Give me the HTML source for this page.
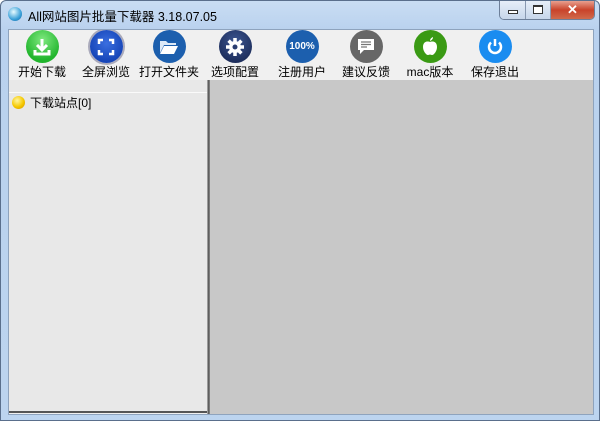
<!DOCTYPE html>
<html><head><meta charset="utf-8"><style>
*{margin:0;padding:0;box-sizing:border-box}
body{width:600px;height:421px;overflow:hidden;font-family:"Liberation Sans","Noto Sans CJK SC",sans-serif;font-size:12px;color:#000;background:#fff}
.win{position:absolute;left:0;top:0;width:600px;height:421px;background:linear-gradient(#c9ddf3,#b9d1ee 30px,#bcd4ef);border:1px solid #5a6f8c;border-radius:6px 6px 0 0}
.title{position:absolute;left:27px;top:5px;font-size:12.5px;color:#000}
.logo{position:absolute;left:7px;top:6px;width:14px;height:14px;border-radius:50%;background:radial-gradient(circle at 40% 35%,#e8fbff,#3aa0d8 60%,#1060a0)}
.btns{position:absolute;left:498px;top:0;height:19px;display:flex;border:1px solid #6d7f99;border-top:none;border-radius:0 0 5px 5px;overflow:hidden}
.btns div{height:18px;background:linear-gradient(#e6eef8,#c7d6ea);border-right:1px solid #8898b0;position:relative}
.b1{width:26px}.b2{width:25px}.b3{width:43px;background:linear-gradient(#e8a08f,#c9432a 50%,#d06a4c)!important;border:none!important;color:#fff;text-align:center;font-weight:bold;font-size:13px;line-height:17px}
.client{position:absolute;left:7px;top:28px;width:586px;height:386px;background:#f0f0f0;border:1px solid #8ea3bd;overflow:hidden}
.tb{position:absolute;left:0;top:0;width:584px;height:50px;background:#f0f0f0}
.it{position:absolute;top:0px;width:70px;text-align:center}
.ic{width:33px;height:33px;border-radius:50%;margin:0 auto;display:flex;align-items:center;justify-content:center;color:#fff;font-weight:bold}
.lb{font-size:12px;margin-top:3px;line-height:13px;white-space:nowrap}
.left{position:absolute;left:0;top:50px;width:198px;height:333px;background:#e8e8e8;border-bottom:2px solid #555}
.split{position:absolute;left:198px;top:50px;width:3px;height:334px;background:linear-gradient(90deg,#ccc,#555 40%,#888)}
.right{position:absolute;left:201px;top:50px;width:384px;height:334px;background:#c8c8c8}
.node{position:absolute;left:3px;top:14px;display:flex;align-items:center}
.dot{width:13px;height:13px;border-radius:50%;background:radial-gradient(circle at 40% 35%,#fff6a0,#f5c800 55%,#d09000);margin-right:5px}
</style></head><body>
<div class="win">
<div class="logo"></div>
<div class="title">All网站图片批量下载器 3.18.07.05</div>
<div class="btns"><div class="b1"><span style="position:absolute;left:8px;top:9px;width:10px;height:4px;border:1px solid #333;background:#fff"></span></div><div class="b2"><span style="position:absolute;left:7px;top:4px;width:10px;height:9px;border:1px solid #333;border-top-width:2px;background:#fff"></span></div><div class="b3">✕</div></div>
<div class="client">
<div class="tb">
<div class="it" style="left:-2px"><div class="ic" style="background:radial-gradient(circle at 50% 30%,#7fe87f,#21b52d 70%)"><svg width="20" height="20" viewBox="0 0 20 20"><path d="M10 2v10M5 8l5 5 5-5M3 13v4h14v-4" stroke="#fff" stroke-width="3" fill="none"/></svg></div><div class="lb">开始下载</div></div>
<div class="it" style="left:62px"><div class="ic" style="background:radial-gradient(circle at 50% 40%,#3b6fe0,#1645b8 70%);box-shadow:0 0 0 2px #aab"><svg width="18" height="18" viewBox="0 0 18 18"><path d="M2 6V2h4M12 2h4v4M16 12v4h-4M6 16H2v-4" stroke="#fff" stroke-width="2.5" fill="none"/></svg></div><div class="lb">全屏浏览</div></div>
<div class="it" style="left:125px"><div class="ic" style="background:#1c5fae"><svg width="20" height="16" viewBox="0 0 20 16"><path d="M1 2h6l2 2h8v2H5L1 14z" fill="#dce9f7"/><path d="M5 7h14l-4 8H1z" fill="#fff"/></svg></div><div class="lb">打开文件夹</div></div>
<div class="it" style="left:191px"><div class="ic" style="background:radial-gradient(circle at 50% 35%,#3c5590,#1d2e5c 75%)"><svg width="20" height="20" viewBox="0 0 20 20"><circle cx="10" cy="10" r="6" fill="#fff"/><path d="M10 1v18M1 10h18M3.6 3.6l12.8 12.8M16.4 3.6L3.6 16.4" stroke="#fff" stroke-width="3.5"/><circle cx="10" cy="10" r="2.5" fill="#2a3d70"/></svg></div><div class="lb">选项配置</div></div>
<div class="it" style="left:258px"><div class="ic" style="background:#1c5fae;font-size:10px">100%</div><div class="lb">注册用户</div></div>
<div class="it" style="left:322px"><div class="ic" style="background:#676767"><svg width="18" height="17" viewBox="0 0 18 17"><path d="M1 1h16v11H7l-4 4v-4H1z" fill="#fff"/><path d="M4 4h10M4 6.5h10M4 9h6" stroke="#777" stroke-width="1.2"/></svg></div><div class="lb">建议反馈</div></div>
<div class="it" style="left:386px"><div class="ic" style="background:#3a9a14"><svg width="16" height="19" viewBox="0 0 16 19"><path d="M8 5C6 4 1 4 1 10c0 4 3 8 5 8 1 0 1.5-.5 2-.5s1 .5 2 .5c2 0 5-4 5-8 0-6-5-6-7-5z" fill="#fff"/><path d="M8 4c0-2 1-3 3-4 0 2-1 3-3 4z" fill="#fff"/></svg></div><div class="lb">mac版本</div></div>
<div class="it" style="left:451px"><div class="ic" style="background:#1a8cf0"><svg width="18" height="18" viewBox="0 0 18 18"><path d="M5 4.5a6 6 0 1 0 8 0" stroke="#fff" stroke-width="2.5" fill="none"/><path d="M9 1v7" stroke="#fff" stroke-width="2.5"/></svg></div><div class="lb">保存退出</div></div>
</div>
<div class="left"><div style="position:absolute;left:0;top:12px;width:198px;height:1px;background:#fafafa"></div><div class="node"><div class="dot"></div>下载站点[0]</div></div>
<div class="split"></div>
<div class="right"></div>
</div>
</div>
</body></html>
